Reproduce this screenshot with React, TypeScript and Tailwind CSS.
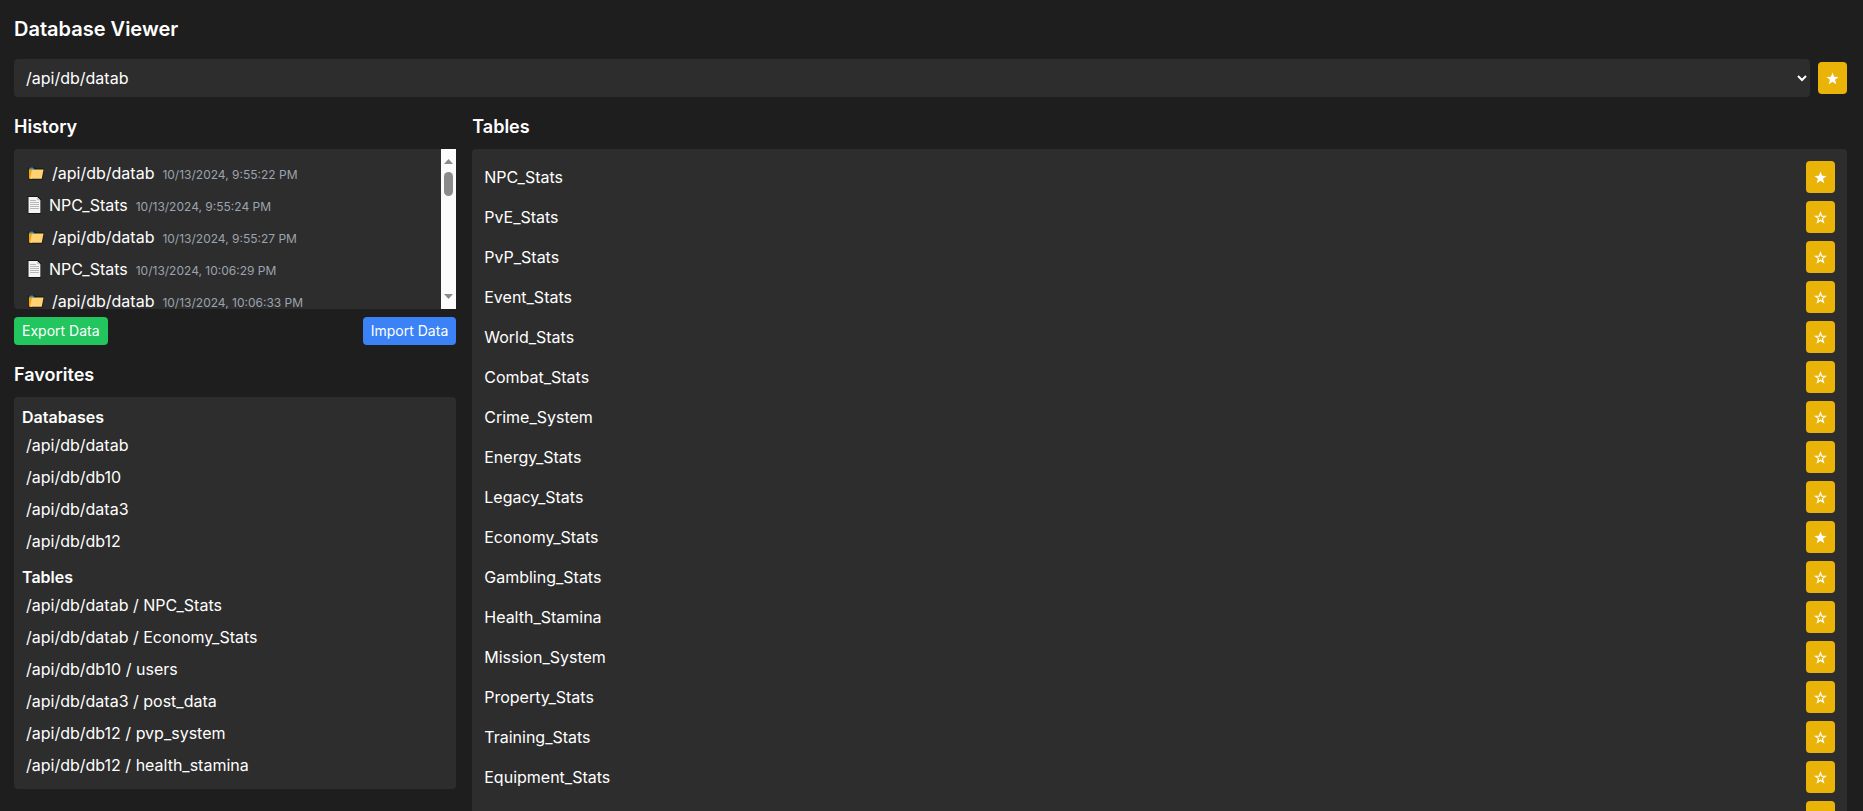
import { useState } from "react";

type HistoryEntry = { kind: "database" | "table"; name: string; time: string };

const databases = ["/api/db/datab", "/api/db/db10", "/api/db/data3", "/api/db/db12"];

const historyEntries: HistoryEntry[] = [
  { kind: "database", name: "/api/db/datab", time: "10/13/2024, 9:55:22 PM" },
  { kind: "table", name: "NPC_Stats", time: "10/13/2024, 9:55:24 PM" },
  { kind: "database", name: "/api/db/datab", time: "10/13/2024, 9:55:27 PM" },
  { kind: "table", name: "NPC_Stats", time: "10/13/2024, 10:06:29 PM" },
  { kind: "database", name: "/api/db/datab", time: "10/13/2024, 10:06:33 PM" },
];

const favoriteTables = [
  "/api/db/datab / NPC_Stats",
  "/api/db/datab / Economy_Stats",
  "/api/db/db10 / users",
  "/api/db/data3 / post_data",
  "/api/db/db12 / pvp_system",
  "/api/db/db12 / health_stamina",
];

const tables = [
  "NPC_Stats",
  "PvE_Stats",
  "PvP_Stats",
  "Event_Stats",
  "World_Stats",
  "Combat_Stats",
  "Crime_System",
  "Energy_Stats",
  "Legacy_Stats",
  "Economy_Stats",
  "Gambling_Stats",
  "Health_Stamina",
  "Mission_System",
  "Property_Stats",
  "Training_Stats",
  "Equipment_Stats",
  "Inventory_Stats",
];

function FolderIcon() {
  return (
    <svg viewBox="-1 0 18 16" className="h-4 w-[18px] shrink-0" aria-hidden="true">
      <path d="M1.200 2.200h6.600l1.200 1.400h8L15.700 14.600H1.200z" fill="#141414" />
      <path d="M2.400 2.600h4l1.200 1.800H2.400z" fill="#2f86c9" />
      <path d="M1.900 4.200h3.400v9.600H1.900z" fill="#f5a60a" />
      <path d="M5 4.400h11.500l-1.700 9.400H3z" fill="#ffd273" />
    </svg>
  );
}

function PageIcon() {
  return (
    <svg viewBox="-1 0 15 18" className="h-[18px] w-[15px] shrink-0" aria-hidden="true">
      <path d="M.8.200h9.800L14 3.700V17.700H.8z" fill="#111" />
      <path d="M1.500 1h8.600L13.400 4.300V17H1.500z" fill="#f4f4f4" />
      <path d="M10.100 1v3.300h3.300z" fill="#c4c4c4" />
      <path d="M3 4.500h6M3 6.500h9M3 8.500h9M3 10.500h9M3 12.500h9" stroke="#b8b8b8" strokeWidth="1" />
    </svg>
  );
}

function StarButton({ label, active, onToggle }: { label: string; active: boolean; onToggle: () => void }) {
  return (
    <button
      type="button"
      aria-label={label}
      aria-pressed={active}
      onClick={onToggle}
      className="flex h-8 w-[29px] shrink-0 items-center justify-center rounded bg-[#eab308] pt-px text-white"
    >
      <svg viewBox="0 0 24 24" className="size-[13px]" aria-hidden="true">
        {active ? (
          <path d="M12 1l2.900 7.900 8.400.3-6.600 5.200 2.300 8.100-7-4.700-7 4.700 2.300-8.100L.7 9.200l8.400-.3z" fill="currentColor" />
        ) : (
          <path
            d="M12 3.400l2.200 6.300 6.800.2-5.400 4.200 1.900 6.600-5.500-3.800-5.500 3.800 1.900-6.600L3 9.900l6.800-.2z"
            fill="none"
            stroke="currentColor"
            strokeWidth="2.200"
          />
        )}
      </svg>
    </button>
  );
}

function Scrollbar() {
  return (
    <div className="flex w-[15px] shrink-0 flex-col items-center bg-[#fcfcfc] pt-[10px] pb-[10px]" aria-hidden="true">
      <svg viewBox="0 0 9 5" className="h-[5px] w-[9px]">
        <path d="M0 5L4.500 0 9 5z" fill="#8b8b8b" />
      </svg>
      <div className="mt-2 h-6 w-[9px] rounded-full bg-[#8b8b8b]" />
      <svg viewBox="0 0 9 5" className="mt-auto h-[5px] w-[9px]">
        <path d="M0 0L4.500 5 9 0z" fill="#8b8b8b" />
      </svg>
    </div>
  );
}

export default function App() {
  const [database, setDatabase] = useState(databases[0]);
  const [databaseStarred, setDatabaseStarred] = useState(true);
  const [starred, setStarred] = useState<string[]>(["NPC_Stats", "Economy_Stats"]);

  const toggle = (name: string) =>
    setStarred((list) => (list.includes(name) ? list.filter((n) => n !== name) : [...list, name]));

  return (
    <div className="h-screen overflow-hidden bg-[#1e1e1e] pt-[15px] pr-4 pl-[14px] font-['Inter',sans-serif] text-base text-white">
      <h1 className="mb-4 text-xl font-semibold">Database Viewer</h1>

      <div className="mb-4 flex items-center gap-2">
        <div className="relative grow">
          <select
            aria-label="Database"
            value={database}
            onChange={(e) => setDatabase(e.target.value)}
            className="block h-[38px] w-full appearance-none rounded bg-[#2d2d2d] px-3 text-white"
          >
            {databases.map((d) => (
              <option key={d}>{d}</option>
            ))}
          </select>
          <svg
            viewBox="0 0 10 7"
            className="pointer-events-none absolute top-4 right-[3px] h-[7px] w-[10px]"
            aria-hidden="true"
          >
            <path d="M1 1l4 4 4-4" fill="none" stroke="#fff" strokeWidth="2" />
          </svg>
        </div>
        <StarButton
          label="Favorite database"
          active={databaseStarred}
          onToggle={() => setDatabaseStarred(!databaseStarred)}
        />
      </div>

      <div className="flex">
        <aside className="w-1/4 pr-4">
          <section className="mb-4">
            <h2 className="mb-2 text-lg font-semibold">History</h2>
            <div className="flex h-40 overflow-hidden rounded-l bg-[#2d2d2d]">
              <ul className="grow overflow-hidden p-2">
                {historyEntries.map((h) => (
                  <li key={h.time}>
                    <button type="button" className="flex w-full items-center p-1 text-left">
                      {h.kind === "database" ? <FolderIcon /> : <PageIcon />}
                      <span className="ml-2 flex items-baseline gap-2">
                        <span>{h.name}</span>
                        <span className="text-xs text-[#9ca3af]">{h.time}</span>
                      </span>
                    </button>
                  </li>
                ))}
              </ul>
              <Scrollbar />
            </div>
            <div className="mt-2 flex justify-between">
              <button type="button" className="rounded bg-[#22c55e] px-2 py-1 text-sm">
                Export Data
              </button>
              <button type="button" className="rounded bg-[#3b82f6] px-2 py-1 text-sm">
                Import Data
              </button>
            </div>
          </section>

          <section>
            <h2 className="mb-2 text-lg font-semibold">Favorites</h2>
            <div className="rounded bg-[#2d2d2d] p-2">
              <h3 className="font-semibold">Databases</h3>
              <ul>
                {databases.map((d) => (
                  <li key={d}>
                    <button type="button" className="block w-full p-1 text-left">
                      {d}
                    </button>
                  </li>
                ))}
              </ul>
              <h3 className="mt-2 font-semibold">Tables</h3>
              <ul>
                {favoriteTables.map((t) => (
                  <li key={t}>
                    <button type="button" className="block w-full p-1 text-left">
                      {t}
                    </button>
                  </li>
                ))}
              </ul>
            </div>
          </section>
        </aside>

        <main className="w-3/4">
          <h2 className="mb-2 text-lg font-semibold">Tables</h2>
          <ul className="rounded bg-[#2d2d2d] p-2">
            {tables.map((t) => (
              <li key={t} className="flex items-center justify-between p-1">
                <button type="button" className="grow text-left">
                  {t}
                </button>
                <StarButton label={`Favorite ${t}`} active={starred.includes(t)} onToggle={() => toggle(t)} />
              </li>
            ))}
          </ul>
        </main>
      </div>
    </div>
  );
}
